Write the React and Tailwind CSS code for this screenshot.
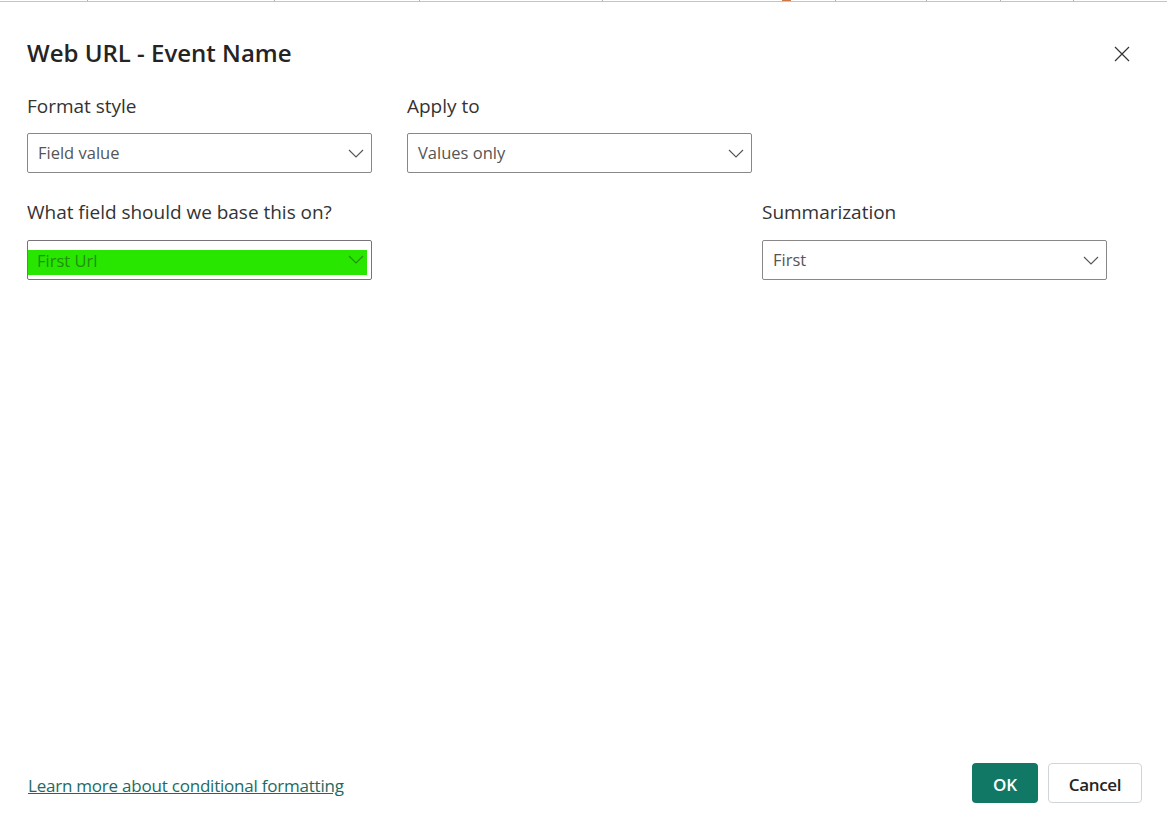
const font = { fontFamily: '"Open Sans", "Noto Sans", sans-serif' };

function Chevron({ className = "" }) {
  return (
    <svg width="16" height="9" viewBox="0 0 16 9" fill="none" className={className}>
      <path d="M1 1l7 7 7-7" stroke="currentColor" strokeWidth="1.1" />
    </svg>
  );
}

function Select({ value }) {
  return (
    <div className="w-[345px] h-[40px] border border-[#8a8886] rounded-[2px] flex items-center justify-between pl-[10px] pr-[7px] text-[#555555] text-[16.5px]">
      <span>{value}</span>
      <Chevron className="text-[#555]" />
    </div>
  );
}

function Highlighted({ value }) {
  return (
    <div className="w-[345px] h-[40px] border border-[#757575] rounded-[2px] pt-[9px] pr-[4px]">
      <div className="h-[25px] bg-[#29e600] flex items-center justify-between pl-[9px] pr-[3px] text-[#1f9010] text-[16.5px]">
        <span className="-mt-[2px]">{value}</span>
        <Chevron className="text-[#238f0c] -mt-[6px]" />
      </div>
    </div>
  );
}

function Label({ children }) {
  return <div className="text-[19px] leading-[24px] text-[#333333] tracking-[-0.02px]">{children}</div>;
}

const ticks = [
  "w-[88px] border-r border-[#b0b0b0]",
  "w-[187px] border-r border-[#b0b0b0]",
  "w-[145px] border-r border-[#b0b0b0]",
  "w-[183px] border-r border-[#b0b0b0]",
  "w-[179px]",
  "w-[9px] bg-[#c9794a]",
  "w-[45px] border-r border-[#b0b0b0]",
  "w-[91px] border-r border-[#b0b0b0]",
  "w-[74px] border-r border-[#b0b0b0]",
  "w-[73px] border-r border-[#b0b0b0]",
];

export default function App() {
  return (
    <div style={font} className="w-[1167px] h-[828px] bg-white flex flex-col overflow-hidden">
      <div className="h-[2px] flex border-b border-[#c4c4c4]">
        {ticks.map((w) => (
          <div key={w} className={`${w} h-[1px]`} />
        ))}
      </div>
      <div className="flex-1 flex flex-col px-[27px] pb-[25px]">
        <div className="flex items-start justify-between pt-[33px]">
          <h1 className="text-[24px] leading-[36px] font-semibold text-[#252423]">Web URL - Event Name</h1>
          <svg width="16" height="16" viewBox="0 0 16 16" fill="none" className="mt-[11px] mr-[10px] text-[#333]">
            <path d="M1 1l14 14M15 1L1 15" stroke="currentColor" strokeWidth="1.2" />
          </svg>
        </div>
        <div className="flex gap-[35px] mt-[23px]">
          <div className="flex flex-col gap-[15px]">
            <Label>Format style</Label>
            <Select value="Field value" />
          </div>
          <div className="flex flex-col gap-[15px]">
            <Label>Apply to</Label>
            <Select value="Values only" />
          </div>
        </div>
        <div className="flex justify-between pr-[33px] mt-[27px]">
          <div className="flex flex-col gap-[16px]">
            <Label>What field should we base this on?</Label>
            <Highlighted value="First Url" />
          </div>
          <div className="flex flex-col gap-[16px]">
            <Label>Summarization</Label>
            <Select value="First" />
          </div>
        </div>
        <div className="mt-auto flex items-center justify-between">
          <a className="ml-[1px] mt-[6px] text-[17px] leading-[22px] text-[#1b6b63] underline tracking-[-0.22px]">Learn more about conditional formatting</a>
          <div className="flex gap-[10px] -mr-[2px]">
            <button className="w-[66px] h-[40px] pt-[3px] rounded-[4px] bg-[#117865] text-white text-[17px] font-semibold">OK</button>
            <button className="w-[94px] h-[40px] pt-[3px] rounded-[4px] bg-white border border-[#d1d5db] text-[#252423] text-[17px] font-semibold tracking-[-0.3px]">Cancel</button>
          </div>
        </div>
      </div>
    </div>
  );
}
